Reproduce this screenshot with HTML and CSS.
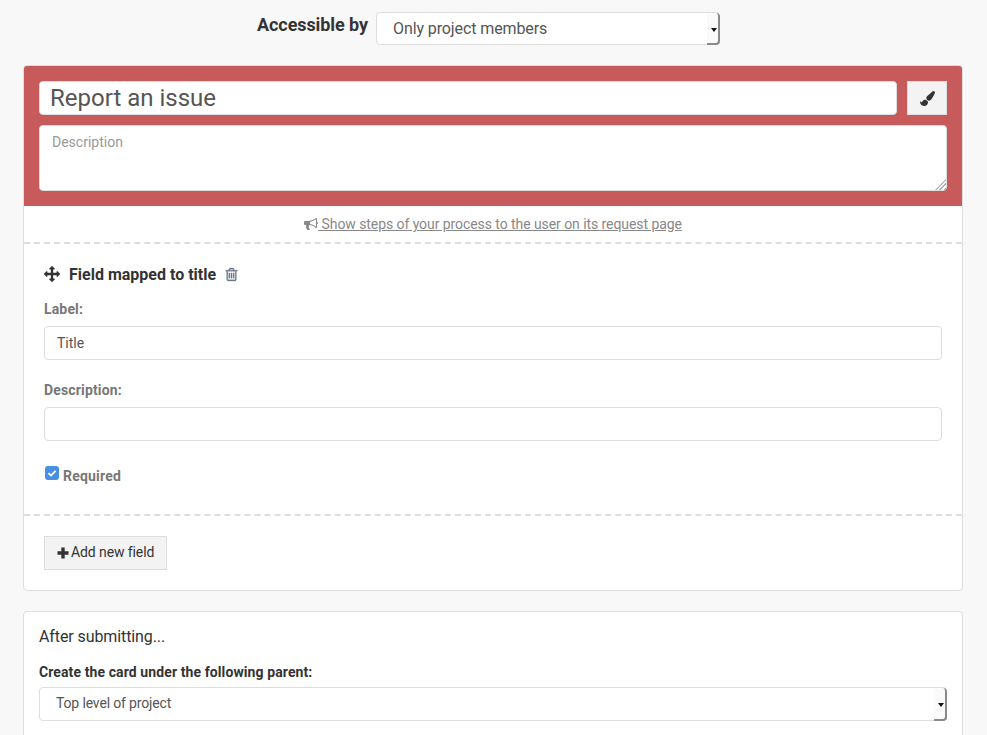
FILE: index.html
```html
<!DOCTYPE html>
<html lang="en">
<head>
<meta charset="utf-8">
<title>Report an issue</title>
<link rel="stylesheet" href="styles.css">
</head>
<body>
<div class="access-row">
  <label class="access-label">Accessible by</label>
  <div class="select-wrap access-wrap"><select class="select access-select"><option>Only project members</option></select></div>
</div>

<section class="card">
  <header class="card-head">
    <div class="title-row">
      <input class="title-input" type="text" value="Report an issue">
      <button class="brush-btn" type="button" aria-label="Color">
        <svg class="icon" width="15" height="15" viewBox="0 0 1792 1792"><path d="M1615 0q70 0 122.500 46.500t52.500 116.500q0 63-45 151-332 629-465 752-97 91-218 91-126 0-216.500-92.500t-90.500-219.500q0-128 92-212l638-579q59-54 130-54zm-909 1034q39 76 106.500 130t150.500 76l1 71q4 213-129.500 347t-348.500 134q-123 0-218-46.500t-152.500-127.500-86.500-183-29-220q7 5 41 30t62 44.500 59 36.500 46 17q41 0 55-37 25-66 57.500-112.500t69.500-76 88-47.500 103-25.500 125-10.500z"/></svg>
      </button>
    </div>
    <div class="desc-wrap"><textarea class="desc-input" placeholder="Description"></textarea></div>
  </header>

  <div class="steps-row">
    <a class="steps-link" href="#"><svg class="icon" width="14" height="14" viewBox="0 0 1792 1792"><path d="M1664 640q53 0 90.500 37.500t37.500 90.500-37.500 90.500-90.500 37.500v384q0 52-38 90t-90 38q-417-347-812-380-58 19-91 66t-31 100.500 40 92.500q-20 33-23 65.500t6 58 33.500 55 48 50 61.500 50.500q-29 58-111.500 83t-168.500 11.500-132-55.500q-7-23-29.500-87.500t-32-94.500-23-89-15-101 3.500-98.500 22-110.500h-122q-66 0-113-47t-47-113v-192q0-66 47-113t113-47h480q435 0 896-384 52 0 90 38t38 90v384zm-128 604v-954q-394 302-768 343v270q377 42 768 341z"/></svg> Show steps of your process to the user on its request page</a>
  </div>

  <div class="field">
    <div class="field-head">
      <svg class="icon" width="16" height="16" viewBox="0 0 1792 1792"><path d="M1792 896q0 26-19 45l-256 256q-19 19-45 19t-45-19-19-45v-128h-384v384h128q26 0 45 19t19 45-19 45l-256 256q-19 19-45 19t-45-19l-256-256q-19-19-19-45t19-45 45-19h128v-384h-384v128q0 26-19 45t-45 19-45-19l-256-256q-19-19-19-45t19-45l256-256q19-19 45-19t45 19 19 45v128h384v-384h-128q-26 0-45-19t-19-45 19-45l256-256q19-19 45-19t45 19l256 256q19 19 19 45t-19 45-45 19h-128v384h384v-128q0-26 19-45t45-19 45 19l256 256q19 19 19 45z"/></svg>
      <span class="field-name">Field mapped to title</span>
      <svg class="icon trash" width="15" height="15" viewBox="0 0 1792 1792"><path d="M704 736v576q0 14-9 23t-23 9h-64q-14 0-23-9t-9-23v-576q0-14 9-23t23-9h64q14 0 23 9t9 23zm256 0v576q0 14-9 23t-23 9h-64q-14 0-23-9t-9-23v-576q0-14 9-23t23-9h64q14 0 23 9t9 23zm256 0v576q0 14-9 23t-23 9h-64q-14 0-23-9t-9-23v-576q0-14 9-23t23-9h64q14 0 23 9t9 23zm128 724v-948h-896v948q0 22 7 40.500t14.500 27 10.500 8.500h832q3 0 10.500-8.500t14.500-27 7-40.500zm-672-1076h448l-48-117q-7-9-17-11h-317q-10 2-17 11zm928 32v64q0 14-9 23t-23 9h-96v948q0 83-47 143.500t-113 60.500h-832q-66 0-113-58.500t-47-141.500v-952h-96q-14 0-23-9t-9-23v-64q0-14 9-23t23-9h309l70-167q15-37 54-63t79-26h320q40 0 79 26t54 63l70 167h309q14 0 23 9t9 23z"/></svg>
    </div>
    <label class="field-label">Label:</label>
    <input class="text-input" type="text" value="Title">
    <label class="field-label second">Description:</label>
    <input class="text-input" type="text">
    <label class="required"><input class="check" type="checkbox" checked><span>Required</span></label>
  </div>

  <div class="add-row">
    <button class="add-btn" type="button"><svg class="icon" width="12" height="12" viewBox="0 0 12 12"><path d="M4.300 0.500h3.400v3.800h3.800v3.400H7.700v3.800H4.300V7.700H.5V4.300h3.800z"/></svg> Add new field</button>
  </div>
</section>

<section class="card after">
  <h2 class="after-title">After submitting...</h2>
  <label class="parent-label">Create the card under the following parent:</label>
  <div class="select-wrap"><select class="select parent-select"><option>Top level of project</option></select></div>
</section>
</body>
</html>
```
FILE: styles.css
```css
html, body { margin: 0; padding: 0; overflow: hidden; height: 735px; }
body { background: #f8f8f8; font-family: Roboto, "Liberation Sans", sans-serif; color: #333; font-size: 14px; }
* { box-sizing: border-box; }
.icon { fill: currentColor; flex: none; }

.access-row { display: flex; justify-content: center; align-items: flex-start; gap: 8px; padding: 12px 10px 0 0; height: 65px; }
.access-label { font-size: 18px; font-weight: 700; line-height: 25px; color: #333; letter-spacing: -0.08px; }

.select-wrap { position: relative; }
.select-wrap::before { content: ""; position: absolute; top: 1px; right: 0; bottom: 0; width: 11px; background: #fafafa; border-right: 2px solid #8a8a8a; border-bottom: 2px solid #8a8a8a; border-radius: 0 4px 4px 0; pointer-events: none; z-index: 1; }
.select-wrap::after { content: ""; position: absolute; top: 50%; right: 3px; margin-top: -1px; border: 3px solid transparent; border-top: 4px solid #111; border-bottom: 0; pointer-events: none; z-index: 2; }
.select { display: block; width: 100%; font-family: inherit; color: #555; background: #fff; border: 1px solid #ddd; border-radius: 4px; appearance: none; }
.access-wrap { width: 344px; }
.access-select { height: 33px; font-size: 16px; padding: 0 16px; letter-spacing: -0.1px; }

.card { margin: 0 24px 20px 23px; background: #fff; border: 1px solid #ddd; border-radius: 4px; overflow: hidden; }
.card-head { background: #c75b5b; padding: 15px; }
.title-row { display: flex; gap: 10px; margin-bottom: 10px; }
.title-input { flex: 1; min-width: 0; height: 34px; font: 24px Roboto, sans-serif; color: #555; padding: 0 10px; border: 1px solid #ddd; border-radius: 4px; background: #fff; }
.brush-btn { width: 40px; height: 34px; padding: 0; background: #f3f3f3; border: 1px solid #ddd; color: #333; display: flex; align-items: center; justify-content: center; }
.desc-wrap { position: relative; }
.desc-wrap::after { content: ""; position: absolute; right: 1px; bottom: 1px; width: 11px; height: 11px; background: repeating-linear-gradient(135deg, transparent 0 1.500px, #aaa 1.500px 3px); clip-path: polygon(100% 0, 100% 100%, 0 100%); pointer-events: none; }
.desc-input { display: block; width: 100%; height: 66px; font: 14px Roboto, sans-serif; color: #555; padding: 8px 12px; border: 1px solid #ddd; border-radius: 4px; background: #fff; resize: none; }
.desc-input::placeholder { color: #999; }

.steps-row { height: 38px; border-bottom: 2px dashed #ddd; text-align: center; line-height: 37px; }
.steps-link { color: #888; font-size: 14px; text-decoration: underline; letter-spacing: -0.07px; }
.steps-link .icon { vertical-align: -2px; }

.field { padding: 19px 20px 0; height: 272px; border-bottom: 2px dashed #ddd; }
.field-head { display: flex; align-items: center; gap: 8px; height: 22px; margin-bottom: 14px; color: #333; }
.field-name { font-size: 16px; font-weight: 700; margin-left: 1px; }
.trash { color: #6b7688; stroke: currentColor; stroke-width: 40; }
.field-label { display: block; font-weight: 700; color: #777; line-height: 20px; margin-bottom: 7px; letter-spacing: 0.15px; }
.field-label.second { margin-top: 20px; margin-bottom: 7px; }
.text-input { display: block; width: 100%; height: 34px; font: 14px Roboto, sans-serif; color: #555; padding: 0 12px; border: 1px solid #ddd; border-radius: 4px; background: #fff; }
.required { display: flex; align-items: flex-start; gap: 4px; margin-top: 25px; margin-left: 1px; font-weight: 700; color: #777; line-height: 20px; letter-spacing: 0.2px; }
.check { appearance: none; width: 14px; height: 14px; margin: 0; border-radius: 3px; background: #4a90e2 url("data:image/svg+xml,%3Csvg xmlns='http://www.w3.org/2000/svg' viewBox='0 0 14 14'%3E%3Cpath d='M3.500 7.200l2.500 2.400 4.600-4.800' fill='none' stroke='%23fff' stroke-width='1.800'/%3E%3C/svg%3E") center / 14px no-repeat; }

.add-row { padding: 20px; }
.add-btn { display: flex; align-items: center; gap: 2px; height: 34px; padding: 0 12px 2px; background: #f3f3f3; border: 1px solid #ddd; color: #333; font: 14px Roboto, sans-serif; letter-spacing: -0.1px; }
.add-btn .icon { margin-top: 2px; }

.after { padding: 14px 15px 60px; }
.after-title { margin: 0 0 14px; font-size: 16px; font-weight: 400; line-height: 22px; color: #333; letter-spacing: -0.1px; }
.parent-label { display: block; font-weight: 700; line-height: 20px; margin-bottom: 5px; letter-spacing: 0.1px; }
.parent-select { height: 34px; font-size: 14px; padding: 0 16px 2px; letter-spacing: -0.15px; }
```
